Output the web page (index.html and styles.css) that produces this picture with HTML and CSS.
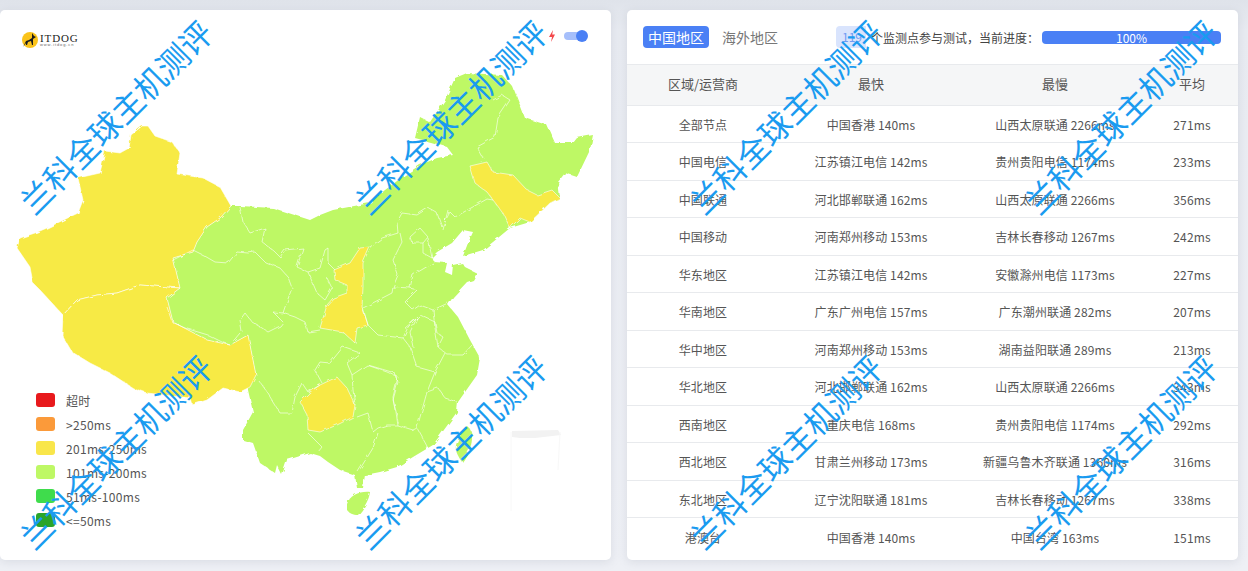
FILE: index.html
```html
<!DOCTYPE html>
<html lang="zh-CN">
<head>
  <meta charset="UTF-8" />
  <meta name="viewport" content="width=device-width, initial-scale=1.0"/>
  <title>ITDOG 测速结果</title>
  <link rel="stylesheet" href="styles.css">
</head>
<body>
  <div id="page">
    <div class="card map-card">
      <svg class="china" viewBox="0 10 611 550">
        <defs>
          <!-- 让折线边界有点毛边,像真实地图 -->
          <filter id="rough" x="-5%" y="-5%" width="110%" height="110%">
            <feTurbulence type="fractalNoise" baseFrequency="0.13" numOctaves="2" seed="4" result="noise"/>
            <feDisplacementMap in="SourceGraphic" in2="noise" scale="4"/>
          </filter>
        </defs>
        <g filter="url(#rough)">
          <!-- 全国底色 -->
          <path class="green" d="M231 206L240 206 273 208 310 220 320 215 333 210 370 203 385 190 405 175 420 165 437 158 453 155 447 147 430 142 415 138 420 117 430 122 445 100 455 78 467 73 502 75 513 87 525 118 547 125 555 143 573 143 577 138 593 135 590 150 577 177 565 173 558 182 560 198 550 203 530 222 510 228 493 242 483 250 463 256 468 243 473 232 463 230 452 243 437 252 432 257 434 262 447 263 445 272 452 275 453 265 462 263 465 267 477 273 473 280 467 282 453 297 448 305 458 317 470 340 480 358 477 375 458 402 457 412 433 445 413 457 397 467 380 472 365 475 363 488 357 488 355 475 340 470 328 462 320 456 310 453 287 460 282 475 277 465 275 473 260 463 253 443 243 440 243 430 253 412 248 390 248 387 256 375 248 335 230 345 207 340 173 322 167 298 180 288 173 258 193 252 197 242 207 227 220 218Z"/>
          <path class="green" d="M347 504C350 495 360 491 370 492 369 500 364 508 358 515 353 515 349 513 347 510Z"/>
          <path class="green" d="M468 427C472 430 473 438 471 445 468 453 465 458 462 462 457 455 455 450 456 445 458 438 463 431 468 427Z"/>
          <!-- 新疆 -->
          <path class="yellow" d="M78 178L100 173 105 151 120 153 129 148 131 135 142 126 148 126 155 136 172 142 180 153 177 174 203 178 220 187 231 206 220 218 207 227 197 242 193 252 173 258 180 288 140 285 117 293 97 295 77 300 63 315 40 290 33 283 30 267 17 248 20 238 35 233 47 228 78 213 83 200Z"/>
          <!-- 西藏 -->
          <path class="yellow" d="M63 315L77 300 97 295 117 293 140 285 180 288 167 298 173 322 207 340 230 345 248 335 256 375 250 387 240 392 223 388 207 400 192 405 190 398 147 393 133 388 110 373 90 363 72 352 62 335Z"/>
          <!-- 吉林 -->
          <path class="yellow" d="M470 166L487 162 493 172 513 175 527 190 537 195 552 190 560 198 550 203 530 222 520 218 510 228 503 213 493 200 487 192 475 183Z"/>
          <!-- 陕西 -->
          <path class="yellow" d="M370 247L363 263 363 287 362 307 368 325 357 328 355 343 343 332 320 328 327 305 333 298 347 293 347 285 335 280 334 270 350 263 360 248Z"/>
          <!-- 贵州 -->
          <path class="yellow" d="M300 402L310 392 320 385 337 377 347 388 355 405 353 417 337 425 320 432 308 430 307 415Z"/>
          <!-- 省界 -->
          <g class="borders">
            <path d="M173 260L193 250 203 255 215 262 228 263 237 252 248 253 255 252 265 262 280 268 288 277 292 288 285 307 283 313 273 312 283 322 280 326 268 332 262 328 252 322 245 313 240 320 242 332"/>
            <path d="M167 307L172 322 185 328 208 335 222 342 230 345 240 333"/>
            <path d="M240 207L243 222 250 233 265 228 262 242 275 252 280 257 285 250 303 248 297 267 308 272 320 268 325 250 328 248 328 263 335 270"/>
            <path d="M308 272L317 293 325 300 332 288 327 278"/>
            <path d="M283 313L295 317 305 322 308 332 320 330"/>
            <path d="M370 247L382 238 398 233 397 222 402 213 417 215 428 208 437 213 442 227 450 212 455 217 487 199"/>
            <path d="M400 233L402 242 393 260 398 275 393 287 392 293 363 308 368 325 378 335 403 338 408 327 420 315"/>
            <path d="M393 287L410 288 417 290 405 302 413 310 420 305 433 310 448 303"/>
            <path d="M410 288L413 275 433 263"/>
            <path d="M410 237L420 228 428 237 423 243 412 243 410 237M428 238L432 258 423 253 423 243"/>
            <path d="M420 315L435 322 437 333 443 337 438 347 448 355 463 355 472 345"/>
            <path d="M433 310L435 328 438 347"/>
            <path d="M403 338L410 347 417 367 435 372 445 353"/>
            <path d="M405 328L417 318 410 332 413 347"/>
            <path d="M260 382L267 392 280 413 292 413 295 397 302 383 308 392 320 385"/>
            <path d="M315 370L320 362 330 363 343 347 360 353 347 363 352 375 367 365 387 372 398 377 393 397 397 425"/>
            <path d="M315 370L322 383"/>
            <path d="M352 375L353 390 355 405"/>
            <path d="M357 417L368 413 373 432 378 428 387 425 397 425 413 430 417 428"/>
            <path d="M378 433L373 448 358 472"/>
            <path d="M308 433L322 447 318 452"/>
            <path d="M368 365L395 373 398 382 393 400 397 415 398 423"/>
            <path d="M435 372L427 392 417 428 428 448"/>
            <path d="M427 392L438 388 445 398 457 402"/>
            <path d="M483 158L477 147 495 137 498 118 510 100 502 95 493 100"/>
            <path d="M487 199L493 200"/>
            <path d="M443 230L448 210"/>
          </g>
        </g>
        <!-- 南海小图,几乎看不见 -->
        <path class="inset" d="M512 431L558 430 561 435 535 438 520 438 512 437Z"/>
        <path class="inset-line" d="M511 432V511M560 432L558 470"/>
      </svg>

      <div class="map-top">
        <div class="logo">
          <svg class="logo-mark" viewBox="0 0 16 16">
            <circle cx="8" cy="8" r="8" fill="#fac31a"/>
            <path d="M1 15L4 9 7 8 10 6 10 1 12 4 14 5 11 7 11 13 10 13 9 9 6 10 5 13 4 13 4 11Z" fill="#1b1b1b"/>
          </svg>
          <div class="logo-words">
            <div class="logo-name">ITDOG</div>
            <div class="logo-url">www.itdog.cn</div>
          </div>
        </div>
        <div class="speed">
          <svg class="bolt" viewBox="0 0 8 12"><path d="M5 0L1 7 4 7 3 12 7 4.500 4.200 4.500Z" fill="#f4474a"/></svg>
          <div class="switch"><span class="knob"></span></div>
        </div>
      </div>

      <ul class="legend">
        <li><i class="c0"></i>超时</li>
        <li><i class="c1"></i>&gt;250ms</li>
        <li><i class="c2"></i>201ms-250ms</li>
        <li><i class="c3"></i>101ms-200ms</li>
        <li><i class="c4"></i>51ms-100ms</li>
        <li><i class="c5"></i>&lt;=50ms</li>
      </ul>
    </div>

    <div class="card table-card">
      <div class="head">
        <div class="tabs">
          <span class="tab active">中国地区</span>
          <span class="tab">海外地区</span>
        </div>
        <div class="progress-info">
          <span class="num">119</span>个监测点参与测试，当前进度：
        </div>
        <div class="bar">100%</div>
      </div>

      <div class="row title"><span>区域/运营商</span><span>最快</span><span>最慢</span><span>平均</span></div>
      <div class="row"><span>全部节点</span><span>中国香港 140ms</span><span>山西太原联通 2266ms</span><span>271ms</span></div>
      <div class="row"><span>中国电信</span><span>江苏镇江电信 142ms</span><span>贵州贵阳电信 1174ms</span><span>233ms</span></div>
      <div class="row"><span>中国联通</span><span>河北邯郸联通 162ms</span><span>山西太原联通 2266ms</span><span>356ms</span></div>
      <div class="row"><span>中国移动</span><span>河南郑州移动 153ms</span><span>吉林长春移动 1267ms</span><span>242ms</span></div>
      <div class="row"><span>华东地区</span><span>江苏镇江电信 142ms</span><span>安徽滁州电信 1173ms</span><span>227ms</span></div>
      <div class="row"><span>华南地区</span><span>广东广州电信 157ms</span><span>广东潮州联通 282ms</span><span>207ms</span></div>
      <div class="row"><span>华中地区</span><span>河南郑州移动 153ms</span><span>湖南益阳联通 289ms</span><span>213ms</span></div>
      <div class="row"><span>华北地区</span><span>河北邯郸联通 162ms</span><span>山西太原联通 2266ms</span><span>343ms</span></div>
      <div class="row"><span>西南地区</span><span>重庆电信 168ms</span><span>贵州贵阳电信 1174ms</span><span>292ms</span></div>
      <div class="row"><span>西北地区</span><span>甘肃兰州移动 173ms</span><span>新疆乌鲁木齐联通 1360ms</span><span>316ms</span></div>
      <div class="row"><span>东北地区</span><span>辽宁沈阳联通 181ms</span><span>吉林长春移动 1267ms</span><span>338ms</span></div>
      <div class="row last"><span>港澳台</span><span>中国香港 140ms</span><span>中国台湾 163ms</span><span>151ms</span></div>
    </div>

    <!-- 水印盖在最上面 -->
    <div class="marks">
      <span>兰科全球主机测评</span><span>兰科全球主机测评</span><span>兰科全球主机测评</span><span>兰科全球主机测评</span>
      <span>兰科全球主机测评</span><span>兰科全球主机测评</span><span>兰科全球主机测评</span><span>兰科全球主机测评</span>
    </div>
  </div>
</body>
</html>
```

FILE: styles.css
```css
* {
  box-sizing: border-box;
}

html, body {
  margin: 0;
  height: 100%;
  overflow: hidden;
}

body {
  font-family: "Noto Sans CJK SC", "Noto Sans", sans-serif;
  font-size: 12px;
  color: #555;
  background: linear-gradient(#dfe3ea, #e8ebf1 30px, #eef0f5);
}

#page {
  position: relative;
  display: flex;
  gap: 16px;
  height: 571px;
  padding-top: 10px;
  overflow: hidden;
}

.card {
  position: relative;
  width: 611px;
  height: 550px;
  background: #fff;
  border-radius: 5px;
  box-shadow: 0 2px 10px rgba(120, 130, 150, 0.18);
  overflow: hidden;
}

/* 地图 */
.china {
  position: absolute;
  left: 0;
  top: 0;
  width: 611px;
  height: 550px;
}

.green {
  fill: #bef865;
}

.yellow {
  fill: #f7ea45;
  stroke: #fff;
  stroke-width: 0.6;
  stroke-linejoin: round;
}

.borders path {
  fill: none;
  stroke: #fff;
  stroke-width: 0.6;
  stroke-linejoin: round;
}

.inset {
  fill: #f2f2f2;
}

.inset-line {
  fill: none;
  stroke: #f8f8f8;
}

.map-top {
  position: relative;
  display: flex;
  justify-content: space-between;
  align-items: flex-start;
  padding: 20px 27px 0 22px;
}

.logo {
  display: flex;
  align-items: center;
  gap: 2px;
  margin-top: 2px;
}

.logo-mark {
  width: 16px;
  height: 16px;
}

.logo-words {
  width: 41px;
}

.logo-name {
  font-family: "Liberation Serif", serif;
  font-size: 11px;
  line-height: 10px;
  letter-spacing: 0.9px;
  color: #222;
}

.logo-url {
  font-family: "Liberation Sans", sans-serif;
  font-size: 4px;
  line-height: 4px;
  letter-spacing: 0.9px;
  color: #666;
}

.speed {
  display: flex;
  align-items: center;
  gap: 8px;
  height: 12px;
}

.bolt {
  width: 8px;
  height: 12px;
}

.switch {
  position: relative;
  width: 20px;
  height: 8px;
  background: #a6bffb;
  border-radius: 4px;
}

.knob {
  position: absolute;
  right: -4px;
  top: -2px;
  width: 12px;
  height: 12px;
  background: #4a80f5;
  border-radius: 50%;
}

.legend {
  position: absolute;
  left: 36px;
  top: 378px;
  margin: 0;
  padding: 0;
  list-style: none;
}

.legend li {
  display: flex;
  align-items: center;
  gap: 11px;
  height: 24px;
  letter-spacing: 0.3px;
}

.legend i {
  width: 19px;
  height: 14px;
  border-radius: 3px;
}

.c0 { background: #e8191c; }
.c1 { background: #fb9a3a; }
.c2 { background: #f9e64a; }
.c3 { background: #bef865; }
.c4 { background: #3fdc4c; }
.c5 { background: #2aa52b; }

/* 右边表格 */
.head {
  display: flex;
  align-items: center;
  height: 55px;
  padding-left: 16px;
  border-bottom: 1px solid #e8eaed;
}

.tabs {
  display: flex;
  gap: 13px;
  width: 193px;
}

.tab {
  font-size: 14px;
  line-height: 22px;
  color: #777;
}

.tab.active {
  padding: 0 5px;
  color: #fff;
  background: #4a80f5;
  border-radius: 4px;
}

.progress-info {
  display: flex;
  align-items: center;
  width: 206px;
  color: #444;
}

.num {
  width: 30px;
  line-height: 22px;
  margin-right: 5px;
  padding-left: 6px;
  color: #6f9bf2;
  background: #d9e4fd;
  border-radius: 4px 0 0 4px;
}

.bar {
  width: 179px;
  height: 13px;
  line-height: 13px;
  text-align: center;
  color: #fff;
  background: #4a80f5;
  border-radius: 4px;
}

.row {
  display: grid;
  grid-template-columns: 152px 184px 184px 90px;
  align-items: center;
  height: 37.500px;
  padding-top: 1px;
  letter-spacing: 0.12px;
  text-align: center;
  border-bottom: 1px solid #e8eaed;
}

.row.title {
  height: 40.500px;
  padding: 0 0 2px;
  font-size: 13px;
  letter-spacing: 0;
  background: #f5f6f7;
}

.row.last {
  height: 38px;
  padding-top: 0;
  border-bottom: none;
}

/* 水印 */
.marks {
  position: absolute;
  left: -52px;
  top: -52px;
  display: grid;
  grid-template-columns: repeat(4, 335px);
  grid-template-rows: repeat(2, 335px);
  pointer-events: none;
}

.marks span {
  align-self: center;
  justify-self: center;
  font-size: 32px;
  line-height: 40px;
  white-space: nowrap;
  color: #1a9bf0;
  transform: rotate(-45deg);
}
```
